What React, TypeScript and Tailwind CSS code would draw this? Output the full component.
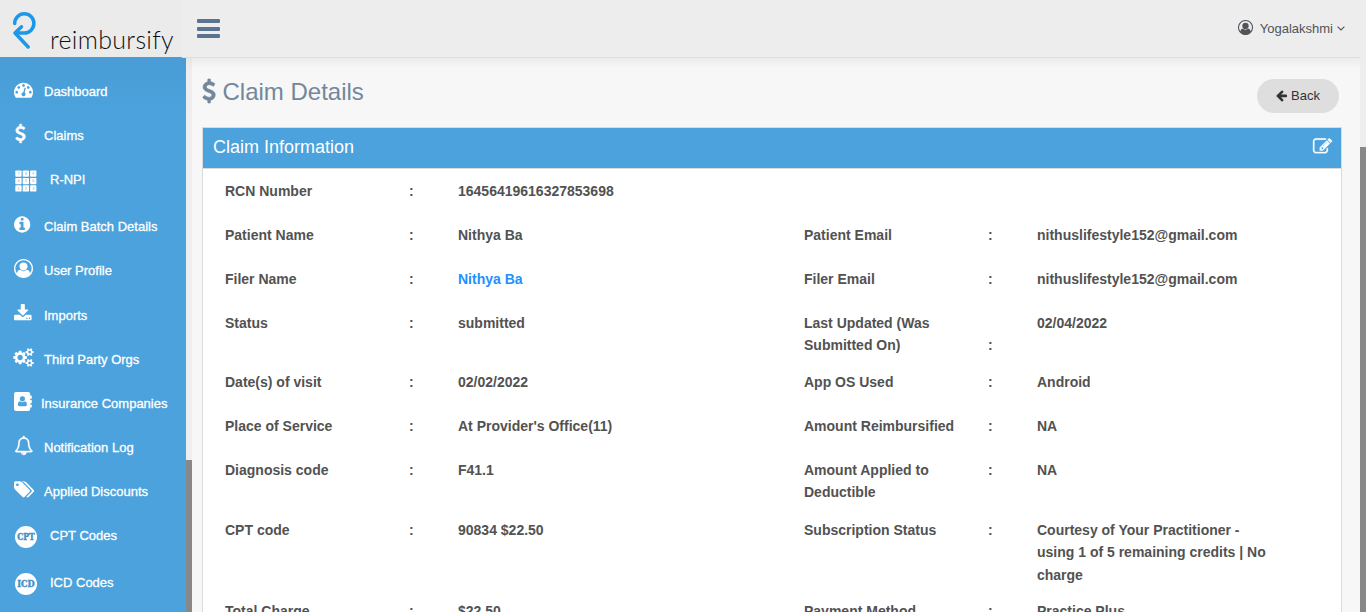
import type { ReactNode } from 'react';

const ICONS = {
  dashboard: { box: '0 0 1792 1792', d: 'M384 1152q0-53-37.5-90.5t-90.5-37.5-90.5 37.5-37.5 90.5 37.5 90.5 90.5 37.5 90.5-37.5 37.5-90.5zm192-448q0-53-37.5-90.5t-90.5-37.5-90.5 37.5-37.5 90.5 37.5 90.5 90.5 37.5 90.5-37.5 37.5-90.5zm428 481l101-382q6-26-7.5-48.5t-38.5-29.5-48 6.5-30 39.5l-101 382q-60 5-107 43.5t-63 98.5q-20 77 20 146t117 89 146-20 89-117q16-60-6-117t-72-91zm660-33q0-53-37.5-90.5t-90.5-37.5-90.5 37.5-37.5 90.5 37.5 90.5 90.5 37.5 90.5-37.5 37.5-90.5zm-640-640q0-53-37.5-90.5t-90.5-37.5-90.5 37.5-37.5 90.5 37.5 90.5 90.5 37.5 90.5-37.5 37.5-90.5zm448 192q0-53-37.5-90.5t-90.5-37.5-90.5 37.5-37.5 90.5 37.5 90.5 90.5 37.5 90.5-37.5 37.5-90.5zm320 448q0 261-141 483-19 29-54 29h-1402q-35 0-54-29-141-221-141-483 0-182 71-348t191-286 286-191 348-71 348 71 286 191 191 286 71 348z' },
  dollar: { box: '384 0 1024 1792', d: 'M1362 1185q0 153-99.5 263.5t-258.5 136.5v175q0 14-9 23t-23 9h-135q-13 0-22.5-9.5t-9.5-22.5v-175q-66-9-127.5-31t-101.5-44.5-74-48-46.5-37.5-17.5-18q-17-21-2-41l103-135q7-10 23-12 15-2 24 9l2 2q113 99 243 125 37 8 74 8 81 0 142.5-43t61.5-122q0-28-15-53t-33.5-42-58.5-37.5-66-32-80-32.5q-39-16-61.5-25t-61.5-26.5-62.5-31-56.5-35.5-53.5-42.5-43.5-49-35.5-58-21-66.5-8.5-78q0-138 98-242t255-134v-180q0-13 9.5-22.5t22.5-9.5h135q14 0 23 9t9 23v176q57 6 110.5 23t87 33.5 63.5 37.5 39 29 15 14q17 18 5 38l-81 146q-8 15-23 16-14 3-27-7-3-3-14.5-12t-39-26.5-58.5-32-74.5-26-85.5-11.5q-95 0-155 43t-60 111q0 26 8.5 48t29.5 41.5 39.5 33 56 31 60.5 27 70 27.5q53 20 81 31.5t76 35 75.5 42.5 62 50 53 63.5 31.5 76.5 13 94z' },
  info: { box: '128 0 1536 1792', d: 'M1152 1376v-160q0-14-9-23t-23-9h-96v-512q0-14-9-23t-23-9h-320q-14 0-23 9t-9 23v160q0 14 9 23t23 9h96v320h-96q-14 0-23 9t-9 23v160q0 14 9 23t23 9h448q14 0 23-9t9-23zm-128-896v-160q0-14-9-23t-23-9h-192q-14 0-23 9t-9 23v160q0 14 9 23t23 9h192q14 0 23-9t9-23zm640 416q0 209-103 385.5t-279.5 279.5-385.5 103-385.5-103-279.5-279.5-103-385.5 103-385.5 279.5-279.5 385.5-103 385.5 103 279.5 279.5 103 385.5z' },
  user: { box: '0 0 1792 1792', d: 'M896 0q182 0 348 71t286 191 191 286 71 348q0 181-70.5 347t-190.5 286-286 191.5-349 71.5-349-71-285.5-191.5-190.5-286-71-347.5 71-348 191-286 286-191 348-71zm619 1351q149-205 149-455 0-156-61-298t-164-245-245-164-298-61-298 61-245 164-164 245-61 298q0 250 149 455 66-327 306-327 131 128 313 128t313-128q240 0 306 327zm-235-647q0-159-112.5-271.5t-271.5-112.5-271.5 112.5-112.5 271.5 112.5 271.5 271.5 112.5 271.5-112.5 112.5-271.5z' },
  download: { box: '64 0 1664 1792', d: 'M1344 1344q0-26-19-45t-45-19-45 19-19 45 19 45 45 19 45-19 19-45zm256 0q0-26-19-45t-45-19-45 19-19 45 19 45 45 19 45-19 19-45zm128-224v320q0 40-28 68t-68 28h-1472q-40 0-68-28t-28-68v-320q0-40 28-68t68-28h465l135 136q58 56 136 56t136-56l136-136h464q40 0 68 28t28 68zm-325-569q17 41-14 70l-448 448q-18 19-45 19t-45-19l-448-448q-31-29-14-70 17-39 59-39h256v-448q0-26 19-45t45-19h256q26 0 45 19t19 45v448h256q42 0 59 39z' },
  cogs: { box: '0 0 1920 1792', d: 'M832 896q0-106-75-181t-181-75-181 75-75 181 75 181 181 75 181-75 75-181zm768 512q0-52-38-90t-90-38-90 38-38 90q0 53 37.5 90.5t90.5 37.5 90.5-37.5 37.5-90.5zm0-1024q0-52-38-90t-90-38-90 38-38 90q0 53 37.5 90.5t90.5 37.5 90.5-37.5 37.5-90.5zm-384 421v185q0 10-7 19.5t-16 10.5l-155 24q-11 35-32 76 34 48 90 115 7 11 7 20 0 12-7 19-23 30-82.5 89.5t-78.5 59.5q-11 0-21-7l-115-90q-37 19-77 31-11 108-23 155-7 24-30 24h-186q-11 0-20-7.5t-10-17.5l-23-153q-34-10-75-31l-118 89q-7 7-20 7-11 0-21-8-144-133-144-160 0-9 7-19 10-14 41-53t47-61q-23-44-35-82l-152-24q-10-1-17-9.5t-7-19.5v-185q0-10 7-19.5t16-10.5l155-24q11-35 32-76-34-48-90-115-7-11-7-20 0-12 7-20 22-30 82-89t79-59q11 0 21 7l115 90q34-18 77-32 11-108 23-154 7-24 30-24h186q11 0 20 7.5t10 17.5l23 153q34 10 75 31l118-89q8-7 20-7 11 0 21 8 144 133 144 160 0 8-7 19-12 16-42 54t-45 60q23 48 34 82l152 23q10 2 17 10.5t7 19.5zm640 533v140q0 16-149 31-12 27-30 52 51 113 51 138 0 4-4 7-122 71-124 71-8 0-46-47t-52-68q-20 2-30 2t-30-2q-14 21-52 68t-46 47q-2 0-124-71-4-3-4-7 0-25 51-138-18-25-30-52-149-15-149-31v-140q0-16 149-31 13-29 30-52-51-113-51-138 0-4 4-7 4-2 35-20t59-34 30-16q8 0 46 46.5t52 67.5q20-2 30-2t30 2q51-71 92-112l6-2q4 0 124 70 4 3 4 7 0 25-51 138 17 23 30 52 149 15 149 31zm0-1024v140q0 16-149 31-12 27-30 52 51 113 51 138 0 4-4 7-122 71-124 71-8 0-46-47t-52-68q-20 2-30 2t-30-2q-14 21-52 68t-46 47q-2 0-124-71-4-3-4-7 0-25 51-138-18-25-30-52-149-15-149-31v-140q0-16 149-31 13-29 30-52-51-113-51-138 0-4 4-7 4-2 35-20t59-34 30-16q8 0 46 46.5t52 67.5q20-2 30-2t30 2q51-71 92-112l6-2q4 0 124 70 4 3 4 7 0 25-51 138 17 23 30 52 149 15 149 31z' },
  bell: { box: '64 0 1664 1792', d: 'M912 1696q0-16-16-16-59 0-101.5-42.5t-42.5-101.5q0-16-16-16t-16 16q0 73 51.5 124.5t124.5 51.5q16 0 16-16zm-666-288h1300q-266-300-266-832 0-51-24-105t-69-103-121.5-80.5-169.5-31.5-169.5 31.5-121.5 80.5-69 103-24 105q0 532-266 832zm1482 0q0 52-38 90t-90 38h-448q0 106-75 181t-181 75-181-75-75-181h-448q-52 0-90-38t-38-90q50-42 91-88t85-119.5 74.5-158.5 50-206 19.5-260q0-152 117-282.5t307-158.5q-8-19-8-39 0-40 28-68t68-28 68 28 28 68q0 20-8 39 190 28 307 158.5t117 282.5q0 139 19.5 260t50 206 74.5 158.5 85 119.5 91 88z' },
  tags: { box: '0 0 1920 1792', d: 'M448 448q0-53-37.5-90.5t-90.5-37.5-90.5 37.5-37.5 90.5 37.5 90.5 90.5 37.5 90.5-37.5 37.5-90.5zm1067 576q0 53-37 90l-491 492q-39 37-91 37-53 0-90-37l-715-716q-38-37-64.5-101t-26.5-117v-416q0-52 38-90t90-38h416q53 0 117 26.5t102 64.5l715 714q37 39 37 91zm384 0q0 53-37 90l-491 492q-39 37-91 37-36 0-59-14t-53-45l470-470q37-37 37-90 0-52-37-91l-715-714q-38-38-102-64.5t-117-26.5h224q53 0 117 26.5t102 64.5l715 714q37 39 37 91z' },
  back: { box: '128 0 1536 1792', d: 'M1664 896v128q0 53-32.5 90.5t-84.5 37.5h-704l293 294q38 36 38 90t-38 90l-75 76q-37 37-90 37-52 0-91-37l-651-652q-37-37-37-90 0-52 37-91l651-650q38-38 91-38 52 0 90 38l75 74q38 38 38 91t-38 91l-293 293h704q52 0 84.5 37.5t32.5 90.5z' },
  edit: { box: '0 0 1792 1792', d: 'M888 1184l116-116-152-152-116 116v56h96v96h56zm440-720q-16-16-33 1l-350 350q-17 17-1 33t33-1l350-350q17-17 1-33zm80 594v190q0 119-84.5 203.5t-203.5 84.5h-832q-119 0-203.5-84.5t-84.5-203.5v-832q0-119 84.5-203.5t203.5-84.5h832q63 0 117 25 15 7 18 23 3 17-9 29l-49 49q-14 14-32 8-23-6-45-6h-832q-66 0-113 47t-47 113v832q0 66 47 113t113 47h832q66 0 113-47t47-113v-126q0-13 9-22l64-64q15-15 35-7t20 29zm-96-738l288 288-672 672h-288v-288zm444 132l-92 92-288-288 92-92q28-28 68-28t68 28l152 152q28 28 28 68t-28 68z' },
};

function Icon({ name, className }: { name: keyof typeof ICONS; className: string }) {
  return (
    <svg viewBox={ICONS[name].box} className={`shrink-0 overflow-visible fill-current ${className}`}>
      <path d={ICONS[name].d} />
    </svg>
  );
}

function Keypad() {
  return (
    <svg viewBox="0 0 22 22" className="mt-[1px] size-[22px]">
      {[7, 8, 9, 4, 5, 6, 1, 2, 3].map((n, i) => {
        const x = 0.3 + (i % 3) * 7.4;
        const y = 0.5 + Math.floor(i / 3) * 7.4;
        return (
          <g key={n}>
            <rect x={x} y={y} width="6.300" height="6.300" rx="0.7" fill="#fff" />
            <text x={x + 3.1} y={y + 4.5} fontSize="3.600" textAnchor="middle" fill="#6fb4e2">{n}</text>
          </g>
        );
      })}
    </svg>
  );
}

function Badge({ label }: { label: string }) {
  return (
    <svg viewBox="0 0 22 22" className="mt-[1px] size-[22px]">
      <circle cx="11" cy="11" r="11" fill="#fff" />
      <text x="11" y="14" fontSize="8.500" fontWeight="700" textAnchor="middle" textLength="17.500" lengthAdjust="spacingAndGlyphs" fill="#4590c4" stroke="#4590c4" strokeWidth="0.4" fontFamily="'DejaVu Serif', serif">{label}</text>
    </svg>
  );
}

function AddressBook() {
  return (
    <svg viewBox="0 0 18 19" className="mb-[5px] h-[19px] w-[18px]">
      <path fill="#fff" fillRule="evenodd" d="M2 0h12.2q2 0 2 2v1.6h1q.6 0 .6.6v2q0 .6-.6.6h-1v1.2h1q.6 0 .6.6v2q0 .6-.6.6h-1v1.2h1q.6 0 .6.6v2q0 .6-.6.6h-1V17q0 2-2 2H2q-2 0-2-2V2Q0 0 2 0z" />
      <circle cx="8.4" cy="6.8" r="2.6" fill="#4ba2dc" />
      <path fill="#4ba2dc" d="M5.6 9.300q2.800 2 5.600 0q1.700.3 1.700 3.300q0 1.600-1.300 1.600H5.200q-1.300 0-1.300-1.600q0-3 1.700-3.300z" />
    </svg>
  );
}

type NavItem = { label: string; icon: ReactNode; row: string; slot: string };

const NAV: NavItem[] = [
  { label: 'Dashboard', row: 'h-[44px]', slot: 'w-[30px]', icon: <Icon name="dashboard" className="mb-[5px] size-[19px]" /> },
  { label: 'Claims', row: 'h-[44px]', slot: 'w-[30px]', icon: <Icon name="dollar" className="mb-[5px] ml-[0.5px] h-[19px] w-[11px] stroke-current [stroke-width:45]" /> },
  { label: 'R-NPI', row: 'h-[47px]', slot: 'w-[36px] pl-[1px]', icon: <Keypad /> },
  { label: 'Claim Batch Details', row: 'h-[44px]', slot: 'w-[30px]', icon: <Icon name="info" className="mb-[5px] h-[19px] w-[16.300px]" /> },
  { label: 'User Profile', row: 'h-[45px]', slot: 'w-[30px]', icon: <Icon name="user" className="mb-[5px] size-[19px]" /> },
  { label: 'Imports', row: 'h-[44px]', slot: 'w-[30px]', icon: <Icon name="download" className="mb-[5px] h-[19px] w-[17.600px]" /> },
  { label: 'Third Party Orgs', row: 'h-[44px]', slot: 'w-[30px]', icon: <Icon name="cogs" className="mb-[5px] h-[19px] w-[20.400px]" /> },
  { label: 'Insurance Companies', row: 'h-[44px]', slot: 'w-[27px]', icon: <AddressBook /> },
  { label: 'Notification Log', row: 'h-[44px]', slot: 'w-[30px] pl-[1px]', icon: <Icon name="bell" className="mb-[5px] h-[19px] w-[17.600px] stroke-current [stroke-width:35]" /> },
  { label: 'Applied Discounts', row: 'h-[44px]', slot: 'w-[30px]', icon: <Icon name="tags" className="mb-[5px] h-[19px] w-[20.400px]" /> },
  { label: 'CPT Codes', row: 'h-[47px]', slot: 'w-[36px] pl-[1px]', icon: <Badge label="CPT" /> },
  { label: 'ICD Codes', row: 'h-[47px]', slot: 'w-[36px] pl-[1px]', icon: <Badge label="ICD" /> },
];

type Row = { h: string; a: [string, string]; b?: [string, string]; link?: boolean; low?: boolean };

const ROWS: Row[] = [
  { h: 'h-[44px]', a: ['RCN Number', '16456419616327853698'] },
  { h: 'h-[44px]', a: ['Patient Name', 'Nithya Ba'], b: ['Patient Email', 'nithuslifestyle152@gmail.com'] },
  { h: 'h-[44px]', a: ['Filer Name', 'Nithya Ba'], b: ['Filer Email', 'nithuslifestyle152@gmail.com'], link: true },
  { h: 'h-[59px]', a: ['Status', 'submitted'], b: ['Last Updated (Was Submitted On)', '02/04/2022'], low: true },
  { h: 'h-[44px]', a: ['Date(s) of visit', '02/02/2022'], b: ['App OS Used', 'Android'] },
  { h: 'h-[44px]', a: ['Place of Service', "At Provider's Office(11)"], b: ['Amount Reimbursified', 'NA'] },
  { h: 'h-[60px]', a: ['Diagnosis code', 'F41.1'], b: ['Amount Applied to Deductible', 'NA'] },
  { h: 'h-[81px]', a: ['CPT code', '90834 $22.50'], b: ['Subscription Status', 'Courtesy of Your Practitioner - using 1 of 5 remaining credits | No charge'] },
  { h: 'h-[44px]', a: ['Total Charge', '$22.50'], b: ['Payment Method', 'Practice Plus'] },
];

export default function App() {
  return (
    <div className="flex h-[612px] w-[1366px] flex-col overflow-hidden bg-[#f7f7f7] font-['Liberation_Sans',Arial,sans-serif] text-[13px]">
      <header className="relative z-10 flex h-[58px] shrink-0">
        <div className="flex h-[57px] w-[182px] shrink-0 bg-[#ebebeb]">
          <svg viewBox="0 0 30 42" className="mt-[10px] ml-[10px] h-[42px] w-[30px] shrink-0" fill="none" stroke="#1d98e6" strokeWidth="3.500" strokeLinecap="round" strokeLinejoin="round">
            <path d="M4.700 13.500A9.600 9.600 0 1 1 14.300 23H5.500" />
            <path d="M11.500 16.800L5 23L18.200 37" />
          </svg>
          <span className="mt-[24px] ml-[10px] font-['Lato'] text-[25px] leading-[30px] font-light tracking-[0.330px] text-[#111]">reimbursify</span>
        </div>
        <div className="flex flex-1 bg-[#ededed]">
          <div className="mr-[6px] flex flex-1 justify-between border-b border-[#d9dee4] shadow-[4px_5px_8px_rgba(0,0,0,0.05)] [clip-path:inset(0_0_-16px_0)]">
            <div className="mt-[19px] ml-[15px] flex w-[23px] flex-col gap-[3.500px]">
              <i className="h-[4px] rounded-[1px] bg-[#5a738e]" />
              <i className="h-[4px] rounded-[1px] bg-[#5a738e]" />
              <i className="h-[4px] rounded-[1px] bg-[#5a738e]" />
            </div>
            <div className="mr-[15px] flex h-[56px] items-center text-[#515356]">
              <Icon name="user" className="mb-[1px] size-[15px]" />
              <span className="mt-[1px] ml-[7px]">Yogalakshmi</span>
              <svg viewBox="0 0 8 5" className="ml-[4px] h-[5px] w-[8px]" fill="none" stroke="currentColor" strokeWidth="1.1">
                <path d="M.6.6L4 4L7.400.600" />
              </svg>
            </div>
          </div>
        </div>
      </header>

      <div className="-mt-px flex min-h-0 flex-1">
        <aside className="w-[186px] shrink-0 overflow-hidden bg-[#4ba2dc] bg-linear-to-b from-[#4a9dd6] to-[#4ba2dc] to-10% pt-[13px] text-white">
          <nav>
            {NAV.map((item) => (
              <a key={item.label} className={`block ${item.row}`}>
                <span className="flex h-[44px] items-center pl-[14px]">
                  <span className={`flex shrink-0 items-center ${item.slot}`}>{item.icon}</span>
                  <span className="whitespace-nowrap [-webkit-text-stroke:0.3px_white]">{item.label}</span>
                </span>
              </a>
            ))}
          </nav>
        </aside>
        <div className="flex w-[6px] shrink-0 flex-col justify-end bg-[#eee]">
          <div className="h-[152px] bg-[#888]" />
        </div>

        <main className="min-w-0 flex-1 overflow-hidden pr-[18px] pl-[10px]">
          <div className="flex h-[70px] justify-between pr-[3px] text-[#73879c]">
            <h1 className="flex h-[70px] items-center text-[24px]">
              <Icon name="dollar" className="mr-[6.500px] mb-[2px] h-[24px] w-[14px] stroke-current [stroke-width:45]" />
              Claim Details
            </h1>
            <button className="mt-[22px] flex h-[34px] w-[82px] items-center justify-center gap-[4px] rounded-full bg-[#dedede] text-[#333]">
              <Icon name="back" className="mb-[1px] h-[13px] w-[11px]" />
              Back
            </button>
          </div>
          <section className="h-[600px] border border-[#d9dcdf] bg-white">
            <div className="flex h-[41px] items-center justify-between border-b border-[#d9dcdf] bg-[#4ba2dc] pr-[9px] pl-[10px] text-white">
              <h2 className="mb-[1px] text-[18px]">Claim Information</h2>
              <Icon name="edit" className="mb-[3px] size-[19px] stroke-current [stroke-width:30]" />
            </div>
            <div className="pt-[11px] pl-[22px] text-[14px] leading-[22.300px] font-bold text-[#525252]">
              {ROWS.map((r) => (
                <div key={r.a[0]} className={`grid grid-cols-[184px_49px_346px_184px_49px_236px] ${r.h}`}>
                  <div>{r.a[0]}</div>
                  <div>:</div>
                  <div className={r.link ? 'text-[#1e90ff]' : ''}>{r.a[1]}</div>
                  {r.b && (
                    <>
                      <div className="pr-[28px]">{r.b[0]}</div>
                      <div className={r.low ? 'pt-[22px]' : ''}>:</div>
                      <div>{r.b[1]}</div>
                    </>
                  )}
                </div>
              ))}
            </div>
          </section>
        </main>
        <div className="flex w-[6px] shrink-0 flex-col bg-[#eee] pt-[90px]">
          <div className="flex-1 bg-[#888]" />
        </div>
      </div>
    </div>
  );
}
